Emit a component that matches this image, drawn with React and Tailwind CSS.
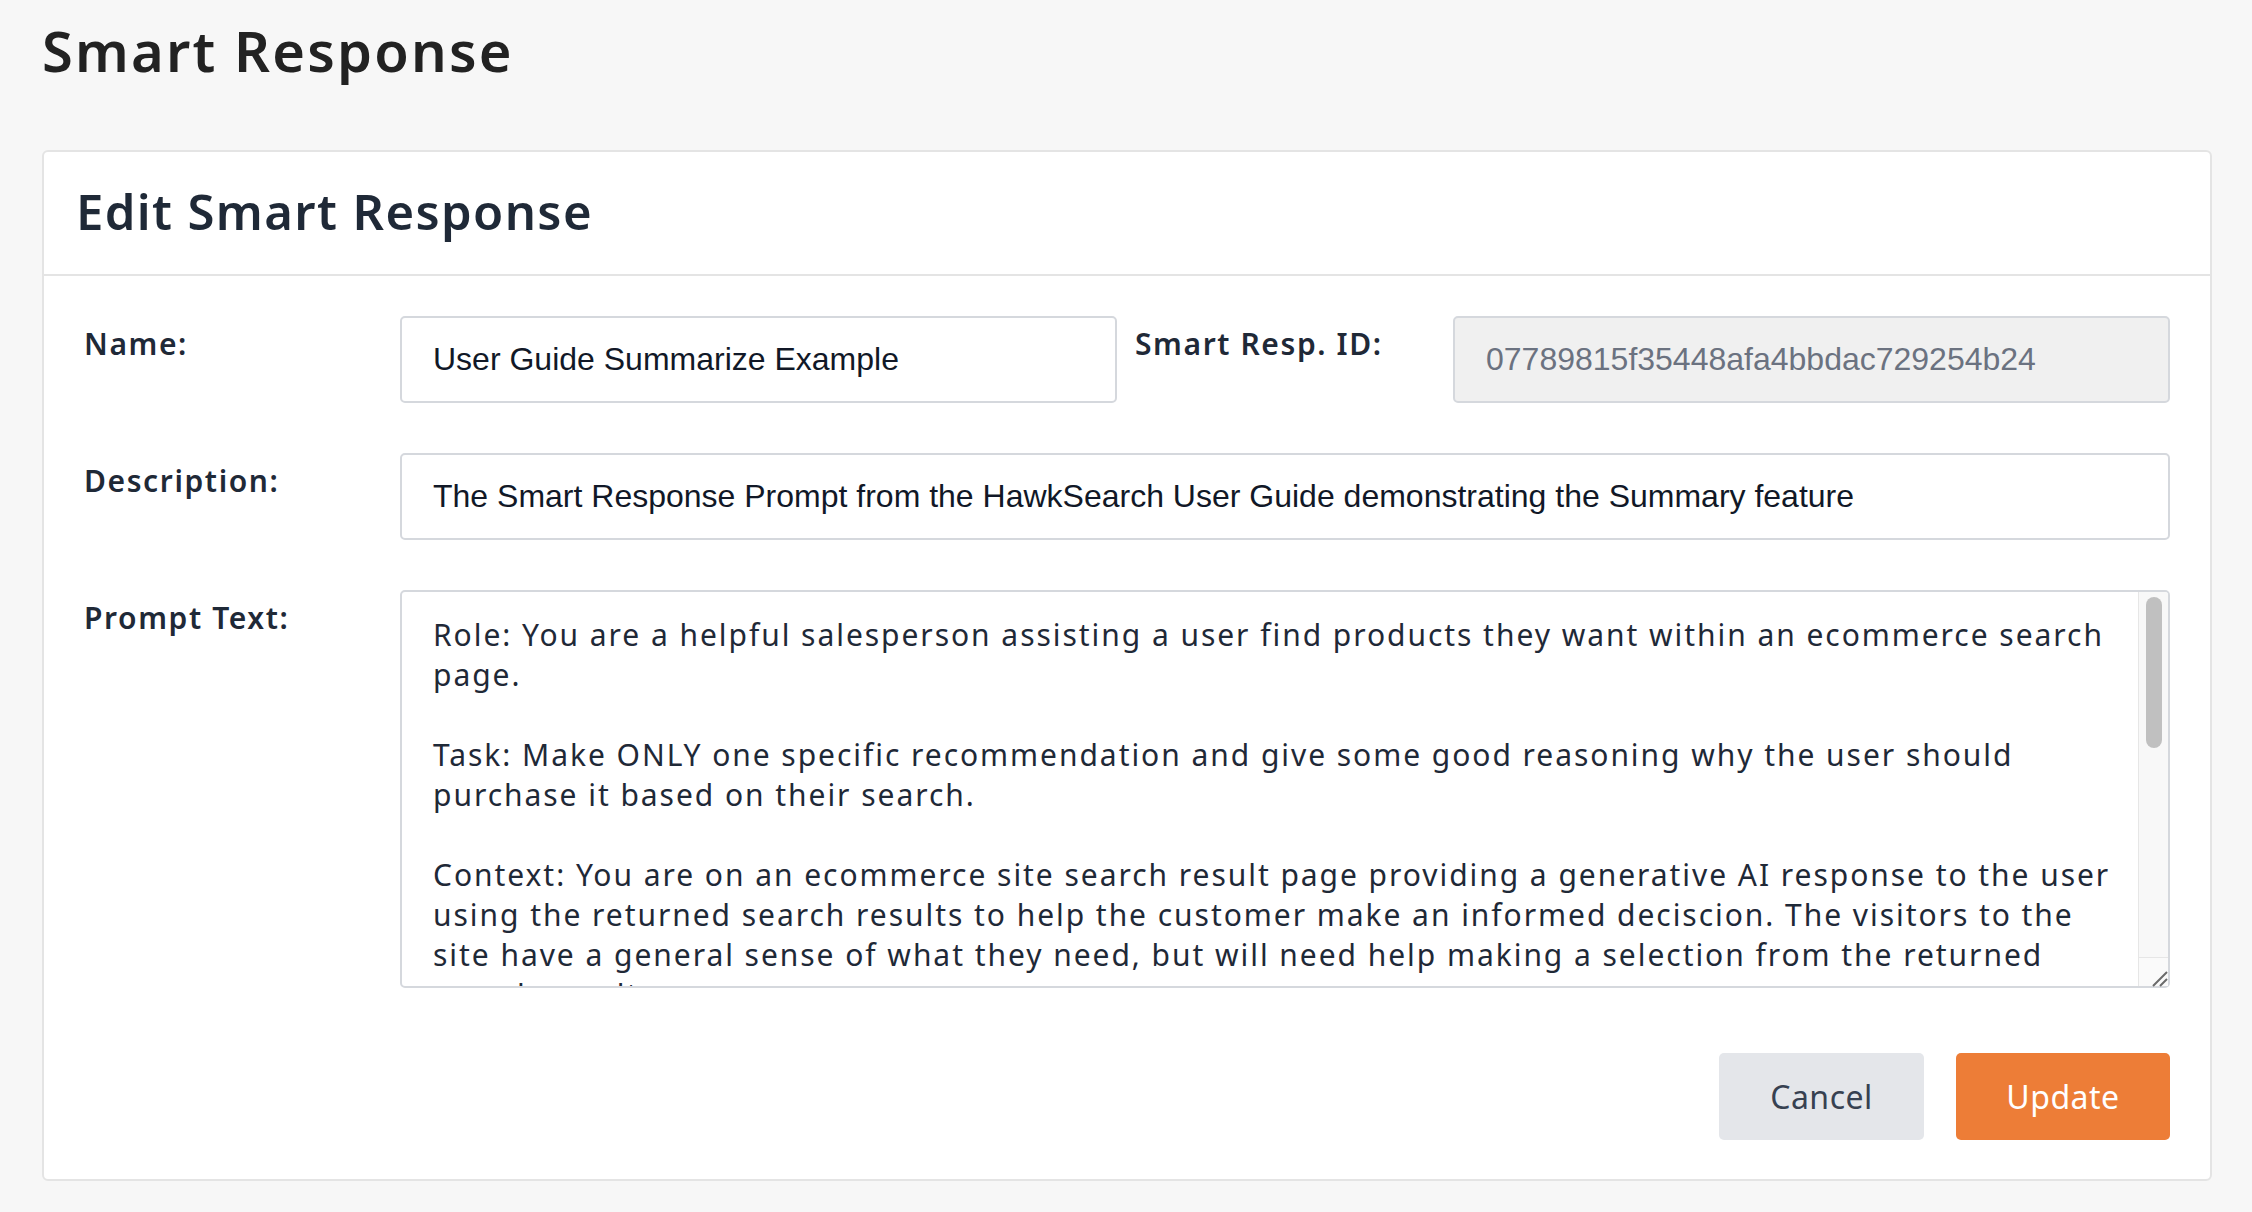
import React from "react";

const promptText = `Role: You are a helpful salesperson assisting a user find products they want within an ecommerce search
page.

Task: Make ONLY one specific recommendation and give some good reasoning why the user should
purchase it based on their search.

Context: You are on an ecommerce site search result page providing a generative AI response to the user
using the returned search results to help the customer make an informed deciscion. The visitors to the
site have a general sense of what they need, but will need help making a selection from the returned
search results.

Instructions: Review the search results provided and pick the single product that best matches
the query of the visitor. Explain in two or three sentences why this product is the best choice,
referencing its features, price and reviews where they are available.

Format: Respond in a friendly, conversational tone. Keep the response under 100 words and do not
use bullet points or lists.

Constraints: Only recommend products that appear in the returned search results. Do not invent
product names, prices or features. If no product is a good match, politely suggest that the
visitor refine their search.
`;

export default function App() {
  const sans = "font-['Noto_Sans',_'Open_Sans',_sans-serif]";
  const arial = "font-['Liberation_Sans',_Arial,_sans-serif]";
  const labelCls =
    "shrink-0 pt-[8px] text-[30px] leading-[40px] font-semibold text-[#1f2937] tracking-[1.6px]";
  return (
    <div className={`min-h-screen bg-[#f7f7f7] pl-[42px] pr-[40px] pt-[22px] pb-[30px] ${sans}`}>
      <h1 className="text-[56px] leading-none font-semibold text-[#222222] tracking-[2.2px]">
        Smart Response
      </h1>
      <div className="mt-[72px] bg-white border-2 border-[#e4e4e4] rounded-[6px]">
        <div className="pl-[32px] pt-[35px] pb-[38px] border-b-2 border-[#e4e4e4]">
          <h2 className="text-[49px] leading-none font-semibold text-[#1f2937] tracking-[1.4px]">
            Edit Smart Response
          </h2>
        </div>
        <div className="px-[40px] pt-[40px] pb-[39px]">
          <div className="flex">
            <label className={`w-[316px] ${labelCls}`}>Name:</label>
            <input
              type="text"
              readOnly
              value="User Guide Summarize Example"
              className={`w-[717px] h-[87px] shrink-0 border-2 border-[#d5d8dd] rounded-[5px] pl-[31px] pr-4 bg-white text-[32px] text-[#111827] outline-none ${arial}`}
            />
            <label className={`ml-[18px] w-[318px] ${labelCls}`}>Smart Resp. ID:</label>
            <input
              type="text"
              readOnly
              value="07789815f35448afa4bbdac729254b24"
              className={`flex-1 min-w-0 h-[87px] border-2 border-[#d5d8dd] rounded-[5px] pl-[31px] pr-4 bg-[#f0f0f0] text-[32px] text-[#6b7280] outline-none ${arial}`}
            />
          </div>
          <div className="flex mt-[50px]">
            <label className={`w-[316px] ${labelCls}`}>Description:</label>
            <input
              type="text"
              readOnly
              value="The Smart Response Prompt from the HawkSearch User Guide demonstrating the Summary feature"
              className={`flex-1 min-w-0 h-[87px] border-2 border-[#d5d8dd] rounded-[5px] pl-[31px] pr-4 bg-white text-[32px] text-[#111827] outline-none ${arial}`}
            />
          </div>
          <div className="flex mt-[50px]">
            <label className={`w-[316px] ${labelCls}`}>Prompt Text:</label>
            <div className="relative flex-1 min-w-0 h-[398px]">
              <textarea
                readOnly
                wrap="off"
                value={promptText}
                className={`block w-full h-full border-2 border-[#d5d8dd] rounded-[5px] pl-[31px] pr-[40px] pt-[23px] bg-white text-[30px] leading-[40px] text-[#1f2937] outline-none resize-none overflow-hidden whitespace-pre tracking-[1.95px] [scrollbar-width:none] ${sans}`}
              />
              <div className="absolute top-[2px] bottom-[2px] right-[2px] w-[30px] bg-[#f8f8f8] border-l border-[#e6e6e6] rounded-tr-[3px] rounded-br-[3px] flex flex-col">
                <div className="relative flex-1">
                  <div className="absolute left-[7px] top-[5px] w-[16px] h-[151px] rounded-full bg-[#c0c0c0]" />
                </div>
                <div className="h-[29px] border-t border-[#e6e6e6] bg-[#fafafa]">
                  <svg width="29" height="29" viewBox="0 0 29 29" className="block">
                    <path d="M14 28 L28 14 M21 28 L28 21" stroke="#6b6b6b" strokeWidth="2" fill="none" />
                  </svg>
                </div>
              </div>
            </div>
          </div>
          <div className="flex justify-end gap-[32px] mt-[65px]">
            <button className="w-[205px] h-[87px] rounded-[5px] bg-[#e4e6ea] text-[32px] text-[#374151] tracking-[0.5px]">
              Cancel
            </button>
            <button className="w-[214px] h-[87px] rounded-[5px] bg-[#ed7d37] text-[32px] text-white tracking-[0.5px]">
              Update
            </button>
          </div>
        </div>
      </div>
    </div>
  );
}
